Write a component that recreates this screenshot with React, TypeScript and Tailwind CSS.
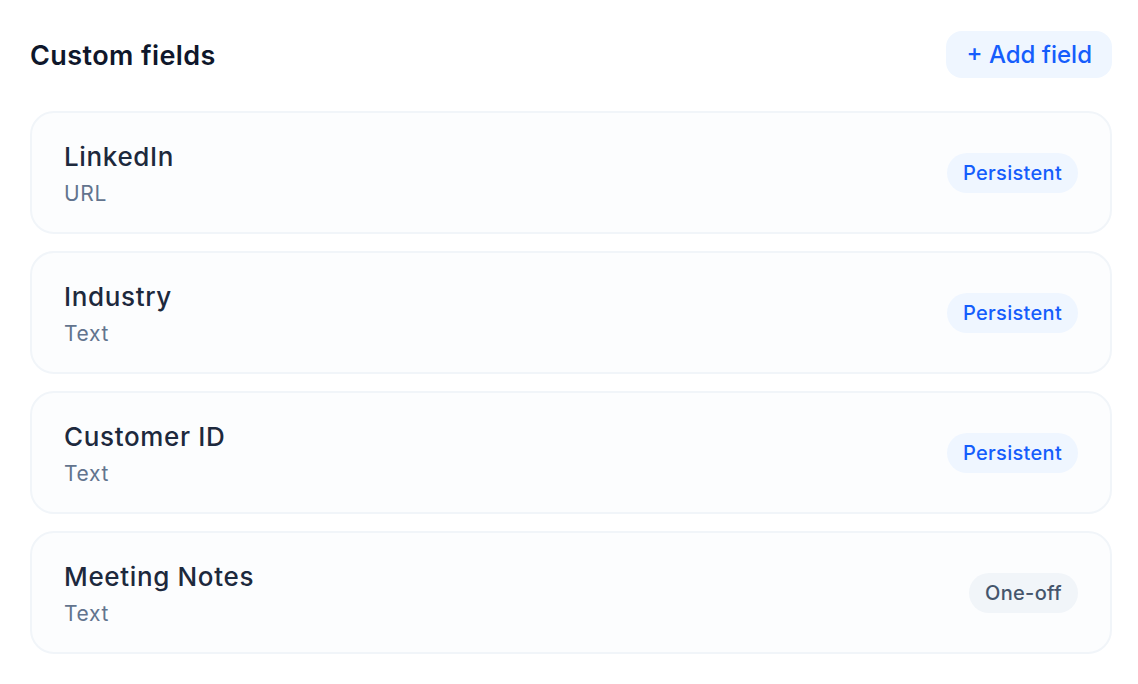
const fields = [
  { name: 'LinkedIn', type: 'URL', scope: 'Persistent' },
  { name: 'Industry', type: 'Text', scope: 'Persistent' },
  { name: 'Customer ID', type: 'Text', scope: 'Persistent' },
  { name: 'Meeting Notes', type: 'Text', scope: 'One-off' },
];

export default function App() {
  return (
    <div className="min-h-screen bg-white px-[30px] pt-[31px] font-['Inter',sans-serif] antialiased">
      <div className="w-[1082px]">
        <div className="flex items-center justify-between">
          <h2 className="mt-[3px] text-[27px] font-semibold tracking-[0.015em] text-slate-900">
            Custom fields
          </h2>
          <button className="h-[47px] rounded-[16px] bg-blue-50 px-[20px] text-[24px] font-medium text-blue-600">
            + Add field
          </button>
        </div>

        <div className="mt-[33px] flex flex-col gap-[17px]">
          {fields.map((field) => (
            <div
              key={field.name}
              className="flex h-[123px] items-center justify-between rounded-[24px] border-2 border-slate-100 bg-slate-50/40 px-[32px]"
            >
              <div className="flex flex-col pt-[3px]">
                <p className="text-[26px] leading-[34px] font-medium tracking-[0.025em] text-slate-800">
                  {field.name}
                </p>
                <p className="mt-[5px] text-[21px] leading-[30px] tracking-[0.03em] text-slate-500">
                  {field.type}
                </p>
              </div>
              <span
                className={
                  field.scope === 'Persistent'
                    ? 'rounded-full bg-blue-50 px-[16px] py-[5px] text-[20px] font-medium tracking-[0.015em] text-blue-600'
                    : 'rounded-full bg-slate-100 px-[16px] py-[5px] text-[20px] font-medium tracking-[0.015em] text-slate-600'
                }
              >
                {field.scope}
              </span>
            </div>
          ))}
        </div>
      </div>
    </div>
  );
}
